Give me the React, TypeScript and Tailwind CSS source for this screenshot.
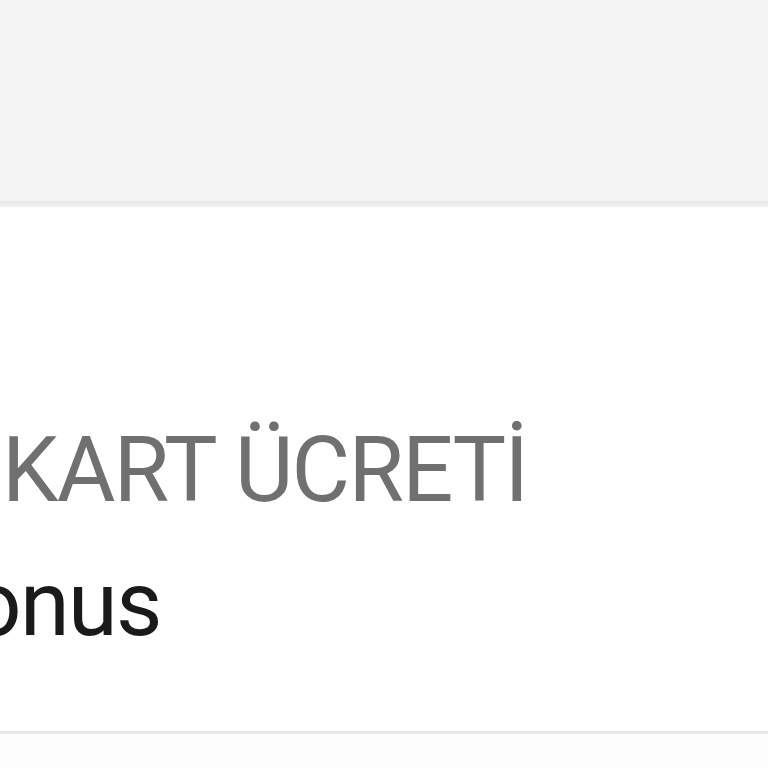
import React from 'react';

export default function App() {
  return (
    <div className="w-[768px] h-[768px] overflow-hidden bg-[#fdfdfd] font-['Roboto',sans-serif]">
      <div className="h-[201px] bg-[#f3f3f3]" />
      <div className="h-[6px] bg-gradient-to-b from-[#e6e6e6] to-[#f2f2f2]" />
      <div className="bg-white pt-[219px] pb-[81px]">
        <div className="pl-[2px] text-[90px] leading-none tracking-[-1.7px] text-[#707070] whitespace-nowrap">KART ÜCRETİ</div>
        <div className="mt-[44px] ml-[-84px] text-[90px] leading-none tracking-[-1.7px] text-[#1a1a1a] whitespace-nowrap">Bonus</div>
      </div>
      <div className="h-[3px] bg-[#e8e8e8]" />
    </div>
  );
}
